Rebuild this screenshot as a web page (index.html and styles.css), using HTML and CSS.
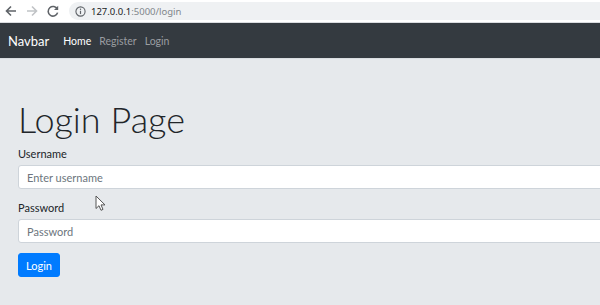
FILE: index.html
```html
<!DOCTYPE html>
<html lang="en">
<head>
    <meta charset="UTF-8">
    <meta name="viewport" content="width=device-width, initial-scale=1.0">
    <title>Login</title>
    <link rel="stylesheet" href="styles.css">
</head>
<body>

    <div class="browser-bar">
        <div class="nav-buttons">
            <svg class="nav-icon" width="14" height="14" viewBox="0 0 14 14">
                <path d="M12 7H3M7 2.5L2.5 7 7 11.5" fill="none" stroke="#5f6368" stroke-width="1.6"/>
            </svg>
            <svg class="nav-icon" width="14" height="14" viewBox="0 0 14 14">
                <path d="M2 7h9M7 2.5L11.5 7 7 11.5" fill="none" stroke="#c0c3c6" stroke-width="1.6"/>
            </svg>
            <svg class="nav-icon" width="14" height="14" viewBox="0 0 14 14">
                <path d="M11.3 5.2A4.8 4.8 0 1 0 11.6 8.6" fill="none" stroke="#5f6368" stroke-width="1.6"/>
                <path d="M12.2 1.8v4.2H8z" fill="#5f6368"/>
            </svg>
        </div>
        <div class="address">
            <svg width="11" height="11" viewBox="0 0 12 12">
                <circle cx="6" cy="6" r="5" fill="none" stroke="#5f6368" stroke-width="1.2"/>
                <path d="M6 5.2v3.6" stroke="#5f6368" stroke-width="1.3"/>
                <circle cx="6" cy="3.5" r="0.75" fill="#5f6368"/>
            </svg>
            <span class="host">127.0.0.1</span><span class="path">:5000/login</span>
        </div>
    </div>

    <nav class="navbar">
        <a class="brand" href="#">Navbar</a>
        <a class="nav-link active" href="#">Home</a>
        <a class="nav-link" href="#">Register</a>
        <a class="nav-link" href="#">Login</a>
    </nav>

    <div class="jumbotron">
        <h1 class="display">Login Page</h1>
        <form class="login-form">
            <label for="username">Username</label>
            <input type="text" id="username" placeholder="Enter username">

            <label for="password">Password</label>
            <input type="password" id="password" placeholder="Password">

            <button type="button">Login</button>
        </form>

        <!-- mouse pointer caught in the screenshot -->
        <svg class="cursor" width="12" height="17" viewBox="0 0 12 17">
            <path d="M1 1v12.5l3-2.8 2 4.6 2-.9-2-4.5h4z" fill="#fff" stroke="#555" stroke-width="1"/>
        </svg>
    </div>

</body>
</html>
```

FILE: styles.css
```css
body {
    margin: 0;
    font-family: 'Lato', 'Noto Sans', sans-serif;
    background-color: #e6e9ec;
    overflow: hidden;
}

.browser-bar {
    height: 22px;
    display: flex;
    align-items: center;
    background-color: #fff;
    border-bottom: 1px solid #dadce0;
    font-family: 'Noto Sans', sans-serif;
}

.nav-buttons {
    display: flex;
    gap: 7px;
    padding-left: 4px;
    width: 62px;
}

.nav-icon {
    display: block;
}

.address {
    flex: 1;
    height: 18px;
    margin-left: 3px;
    display: flex;
    align-items: center;
    gap: 5px;
    padding-left: 6px;
    background-color: #eff1f3;
    border-radius: 9px 0 0 9px;
    font-size: 9.5px;
}

.host {
    color: #202124;
}

.path {
    color: #80868b;
    margin-left: -5px;
}

.navbar {
    height: 35px;
    display: flex;
    align-items: center;
    padding: 0 8px;
    background-color: #343a40;
}

.brand {
    color: #fff;
    font-size: 13px;
    text-decoration: none;
    margin-right: 14px;
}

.nav-link {
    color: #9a9da1;
    font-size: 10.5px;
    text-decoration: none;
    margin-right: 8px;
}

.nav-link.active {
    color: #fff;
}

.jumbotron {
    position: relative;
    padding: 39px 18px 30px;
    border-top: 1px solid #d9dde1;
}

.display {
    margin: 0 0 5px;
    font-size: 36px;
    font-weight: 300;
    line-height: 43px;
    color: #212529;
}

.login-form {
    width: 700px;
}

label {
    display: block;
    font-size: 11px;
    line-height: 15px;
    color: #212529;
    margin-bottom: 4px;
}

input {
    display: block;
    box-sizing: border-box;
    width: 100%;
    height: 24px;
    padding: 0 8px;
    margin-bottom: 11px;
    border: 1px solid #ced4da;
    border-radius: 3px;
    background-color: #fff;
    font-family: inherit;
    font-size: 11px;
}

input::placeholder {
    color: #6c757d;
}

button {
    display: block;
    height: 24px;
    margin-top: -1px;
    padding: 0 7px;
    border: 1px solid #007bff;
    border-radius: 3px;
    background-color: #007bff;
    color: #fff;
    font-family: inherit;
    font-size: 11px;
}

.cursor {
    position: absolute;
    left: 95px;
    top: 136px;
}
```
